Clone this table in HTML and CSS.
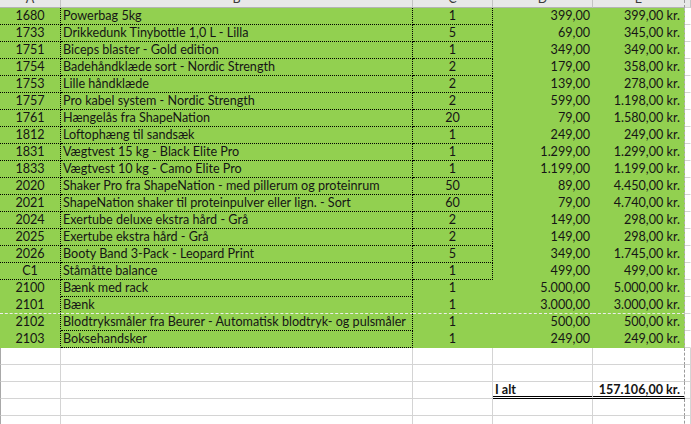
FILE: index.html
```html
<!DOCTYPE html>
<html lang="da">
<head>
<meta charset="utf-8">
<title>Ordre</title>
<link rel="stylesheet" href="styles.css">
</head>
<body>
<div class="sheet">
  <div class="row head">
    <div class="a"><span>A</span></div><div class="b"><span>B</span></div><div class="c3"><span>C</span></div><div class="d"><span>D</span></div><div class="e"><span>E</span></div><div class="f"></div>
  </div>
  <div class="row data box"><div class="a">1680</div><div class="b">Powerbag 5kg</div><div class="c3">1</div><div class="d">399,00</div><div class="e">399,00 kr.</div><div class="f"></div></div>
  <div class="row data box"><div class="a">1733</div><div class="b">Drikkedunk Tinybottle 1,0 L - Lilla</div><div class="c3">5</div><div class="d">69,00</div><div class="e">345,00 kr.</div><div class="f"></div></div>
  <div class="row data box"><div class="a">1751</div><div class="b">Biceps blaster - Gold edition</div><div class="c3">1</div><div class="d">349,00</div><div class="e">349,00 kr.</div><div class="f"></div></div>
  <div class="row data box"><div class="a">1754</div><div class="b">Badehåndklæde sort - Nordic Strength</div><div class="c3">2</div><div class="d">179,00</div><div class="e">358,00 kr.</div><div class="f"></div></div>
  <div class="row data box"><div class="a">1753</div><div class="b">Lille håndklæde</div><div class="c3">2</div><div class="d">139,00</div><div class="e">278,00 kr.</div><div class="f"></div></div>
  <div class="row data box"><div class="a">1757</div><div class="b">Pro kabel system - Nordic Strength</div><div class="c3">2</div><div class="d">599,00</div><div class="e">1.198,00 kr.</div><div class="f"></div></div>
  <div class="row data box"><div class="a">1761</div><div class="b">Hængelås fra ShapeNation</div><div class="c3">20</div><div class="d">79,00</div><div class="e">1.580,00 kr.</div><div class="f"></div></div>
  <div class="row data box"><div class="a">1812</div><div class="b">Loftophæng til sandsæk</div><div class="c3">1</div><div class="d">249,00</div><div class="e">249,00 kr.</div><div class="f"></div></div>
  <div class="row data box"><div class="a">1831</div><div class="b">Vægtvest 15 kg - Black Elite Pro</div><div class="c3">1</div><div class="d">1.299,00</div><div class="e">1.299,00 kr.</div><div class="f"></div></div>
  <div class="row data box"><div class="a">1833</div><div class="b">Vægtvest 10 kg - Camo Elite Pro</div><div class="c3">1</div><div class="d">1.199,00</div><div class="e">1.199,00 kr.</div><div class="f"></div></div>
  <div class="row data box"><div class="a">2020</div><div class="b">Shaker Pro fra ShapeNation - med pillerum og proteinrum</div><div class="c3">50</div><div class="d">89,00</div><div class="e">4.450,00 kr.</div><div class="f"></div></div>
  <div class="row data box"><div class="a">2021</div><div class="b">ShapeNation shaker til proteinpulver eller lign. - Sort</div><div class="c3">60</div><div class="d">79,00</div><div class="e">4.740,00 kr.</div><div class="f"></div></div>
  <div class="row data box"><div class="a">2024</div><div class="b">Exertube deluxe ekstra hård - Grå</div><div class="c3">2</div><div class="d">149,00</div><div class="e">298,00 kr.</div><div class="f"></div></div>
  <div class="row data box"><div class="a">2025</div><div class="b">Exertube ekstra hård - Grå</div><div class="c3">2</div><div class="d">149,00</div><div class="e">298,00 kr.</div><div class="f"></div></div>
  <div class="row data box"><div class="a">2026</div><div class="b">Booty Band 3-Pack - Leopard Print</div><div class="c3">5</div><div class="d">349,00</div><div class="e">1.745,00 kr.</div><div class="f"></div></div>
  <div class="row data box"><div class="a">C1</div><div class="b">Ståmåtte balance</div><div class="c3">1</div><div class="d">499,00</div><div class="e">499,00 kr.</div><div class="f"></div></div>
  <div class="row data"><div class="a">2100</div><div class="b">Bænk med rack</div><div class="c3">1</div><div class="d">5.000,00</div><div class="e">5.000,00 kr.</div><div class="f"></div></div>
  <div class="row data brk"><div class="a">2101</div><div class="b">Bænk</div><div class="c3">1</div><div class="d">3.000,00</div><div class="e">3.000,00 kr.</div><div class="f"></div></div>
  <div class="row data"><div class="a">2102</div><div class="b">Blodtryksmåler fra Beurer - Automatisk blodtryk- og pulsmåler</div><div class="c3">1</div><div class="d">500,00</div><div class="e">500,00 kr.</div><div class="f"></div></div>
  <div class="row data"><div class="a">2103</div><div class="b">Boksehandsker</div><div class="c3">1</div><div class="d">249,00</div><div class="e">249,00 kr.</div><div class="f"></div></div>
  <div class="row blank"><div class="a"></div><div class="b"></div><div class="c3"></div><div class="d"></div><div class="e"></div><div class="f"></div></div>
  <div class="row blank"><div class="a"></div><div class="b"></div><div class="c3"></div><div class="d"></div><div class="e"></div><div class="f"></div></div>
  <div class="row blank total"><div class="a"></div><div class="b"></div><div class="c3"></div><div class="d">I alt</div><div class="e">157.106,00 kr.</div><div class="f"></div></div>
  <div class="row blank"><div class="a"></div><div class="b"></div><div class="c3"></div><div class="d"></div><div class="e"></div><div class="f"></div></div>
  <div class="row blank"><div class="a"></div><div class="b"></div><div class="c3"></div><div class="d"></div><div class="e"></div><div class="f"></div></div>
</div>
</body>
</html>
```
FILE: styles.css
```css
html, body {
  margin: 0;
  padding: 0;
  background: #ffffff;
  overflow: hidden;
}
body {
  font-family: Lato, "Liberation Sans", sans-serif;
  font-size: 12.6px;
  color: #151515;
}
.sheet {
  width: 691px;
  height: 424px;
  overflow: hidden;
}
.row {
  display: grid;
  grid-template-columns: 61px 352px 80px 100px 92px 1fr;
  height: 17px;
}
.row > div {
  box-sizing: border-box;
  height: 17px;
  line-height: 16px;
  white-space: nowrap;
  overflow: hidden;
  border-right: 1px solid transparent;
  border-bottom: 1px solid transparent;
}
.a, .c3 { text-align: center; }
.b { padding-left: 2px; }
.d { text-align: right; padding-right: 2px; }
.e { text-align: right; padding-right: 4px; }

/* column header strip */
.row.head { height: 8px; }
.head > div {
  height: 8px;
  background: #e8e8e8;
  border-right: 1px solid #c3c3c3;
  border-bottom: 1px solid #b4b4b4;
  color: #3a3a3a;
  text-align: center;
  padding: 0;
}
.head > div span {
  display: block;
  margin-top: -9px;
  line-height: 16px;
}
.head .e { border-right: 1px dashed #9a9a9a; }

/* green data rows */
.data > div:not(.f) { background: #92d050; }
.data .a { border-right: 1px dotted #000; }
.data .b {
  border-right: 1px dotted #000;
  border-bottom: 1px dotted #000;
}
.box .a { border-bottom: 1px dotted #000; }
.box .c3 {
  border-right: 1px dotted #000;
  border-bottom: 1px dotted #000;
}
.data .e {
  background-clip: padding-box;
  border-right: 1px dashed #b0b0b0;
}
.f {
  border-bottom: 1px solid #d4d4d4 !important;
}
.brk > div:not(.f) { border-bottom: 1px dashed #ececec; }

/* empty rows below */
.blank > div {
  border-right: 1px solid #d4d4d4;
  border-bottom: 1px solid #d4d4d4;
}
.blank .a { border-left: 1px solid #a8a8a8; }
.blank .e { border-right: 1px dashed #9a9a9a; }
.total .d {
  font-weight: bold;
  text-align: left;
  padding-left: 2px;
  border-bottom: 3px double #000;
  line-height: 15px;
}
.total .e {
  font-weight: bold;
  border-bottom: 3px double #000;
  line-height: 15px;
}
```
